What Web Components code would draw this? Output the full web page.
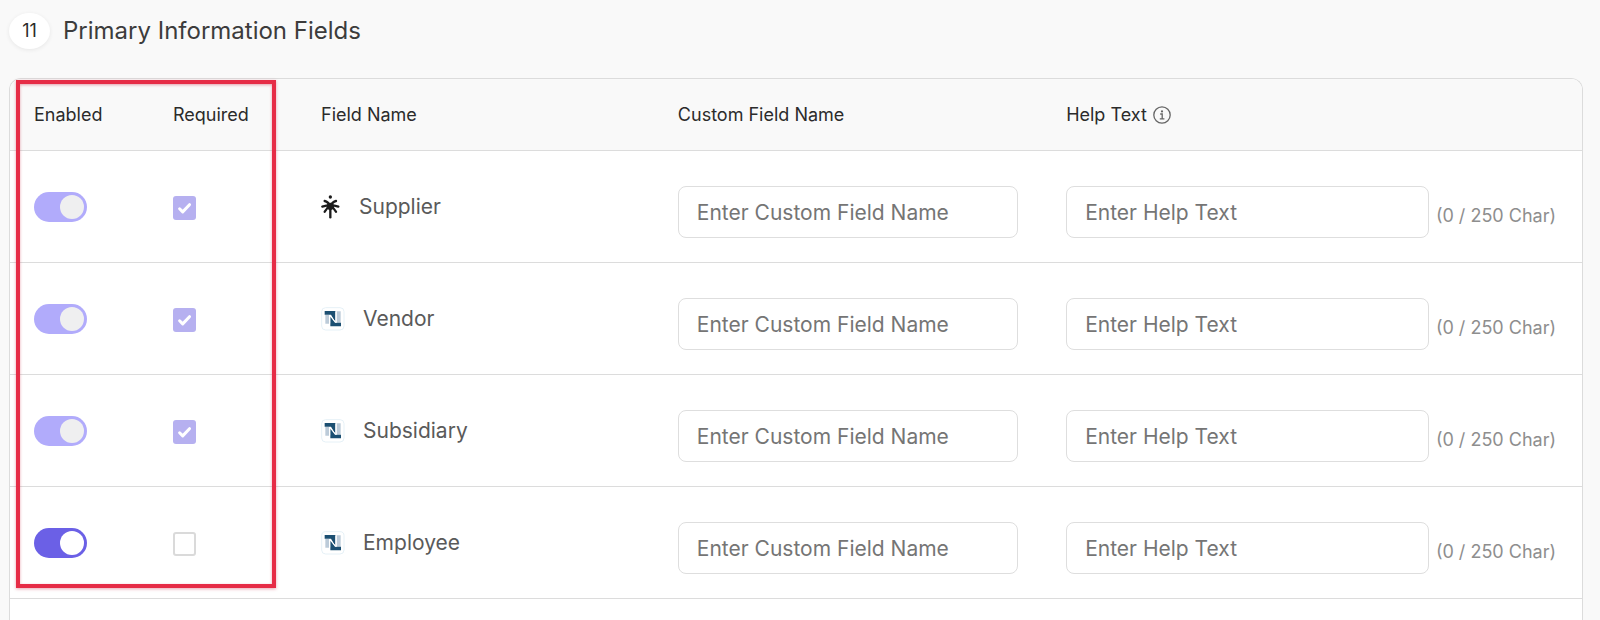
<!DOCTYPE html>
<html lang="en">
<head>
<meta charset="UTF-8">
<meta name="viewport" content="width=device-width, initial-scale=1">
<title>Primary Information Fields</title>
<style>
    body {
        margin: 0;
        background: #f9f9f9;
        font-family: Inter, "Liberation Sans", sans-serif;
        color: #2b2b2b;
    }
</style>
</head>
<body>
<fields-page>
    <section-heading slot="heading" step="11">Primary Information Fields</section-heading>
    <field-table></field-table>
</fields-page>

<script>
class FieldsPage extends HTMLElement {
    constructor() {
        super()
        this.attachShadow({ mode: 'open' })
        this.shadowRoot.innerHTML = `
            <style>
                :host {
                    display: flex;
                    flex-direction: column;
                    gap: 29px;
                    box-sizing: border-box;
                    height: 100vh;
                    overflow: hidden;
                    padding: 13px 17px 0 9px;
                }
                main {
                    flex: 1;
                    display: flex;
                    min-height: 0;
                }
            </style>
            <slot name="heading"></slot>
            <main><slot></slot></main>
        `
    }
}

class SectionHeading extends HTMLElement {
    constructor() {
        super()
        this.attachShadow({ mode: 'open' })
    }

    connectedCallback() {
        this.shadowRoot.innerHTML = `
            <style>
                :host {
                    display: flex;
                    align-items: center;
                    gap: 13px;
                }
                .step {
                    width: 41px;
                    height: 36px;
                    border-radius: 50%;
                    background: #ffffff;
                    box-shadow: 0 1px 4px rgba(0, 0, 0, 0.08);
                    font-size: 18px;
                    line-height: 36px;
                    text-align: center;
                }
                h2 {
                    margin: 0;
                    font-size: 24px;
                    line-height: 36px;
                    font-weight: 400;
                    color: #3c3c3c;
                }
            </style>
            <div class="step">${this.getAttribute('step')}</div>
            <h2><slot></slot></h2>
        `
    }
}

class ToggleSwitch extends HTMLElement {
    constructor() {
        super()
        this.attachShadow({ mode: 'open' })
    }

    connectedCallback() {
        this.shadowRoot.innerHTML = `
            <style>
                :host { display: block; }
                input {
                    appearance: none;
                    display: flex;
                    align-items: center;
                    box-sizing: border-box;
                    width: 53px;
                    height: 30px;
                    margin: 0;
                    padding: 0 3px;
                    border-radius: 15px;
                    background: #cccccc;
                }
                input::before {
                    content: '';
                    width: 24px;
                    height: 24px;
                    border-radius: 50%;
                    background: #ffffff;
                }
                input:checked {
                    justify-content: flex-end;
                    background: #6b60e6;
                }
                input:disabled { background: #b1abfb; }
                input:disabled::before { background: #efeff0; }
            </style>
            <input type="checkbox" role="switch" aria-label="${this.getAttribute('label')}"
                ${this.hasAttribute('checked') ? 'checked' : ''} ${this.hasAttribute('disabled') ? 'disabled' : ''}>
        `
    }
}

class TickBox extends HTMLElement {
    constructor() {
        super()
        this.attachShadow({ mode: 'open' })
    }

    connectedCallback() {
        this.shadowRoot.innerHTML = `
            <style>
                :host {
                    display: grid;
                    width: 23px;
                    padding-top: 3px;
                }
                input, svg { grid-area: 1 / 1; }
                input {
                    appearance: none;
                    box-sizing: border-box;
                    width: 23px;
                    height: 24px;
                    margin: 0;
                    border: 2px solid #dadada;
                    border-radius: 3px;
                    background: #ffffff;
                }
                input:checked {
                    border: 0;
                    background: #b6b0f0;
                }
                svg {
                    width: 23px;
                    height: 24px;
                    pointer-events: none;
                    visibility: hidden;
                }
                input:checked + svg { visibility: visible; }
            </style>
            <input type="checkbox" aria-label="${this.getAttribute('label')}"
                ${this.hasAttribute('checked') ? 'checked' : ''} ${this.hasAttribute('disabled') ? 'disabled' : ''}>
            <svg viewBox="0 0 23 24" fill="none" stroke="#ffffff" stroke-width="3" stroke-linecap="round" stroke-linejoin="round">
                <path d="M6.6 12.8l3.1 3.1 6.8-7.2"/>
            </svg>
        `
    }
}

const logos = {
    // palm-shaped mark
    zip: `<svg width="20" height="24" viewBox="0 0 60 72" aria-hidden="true">
        <circle cx="28" cy="6" r="5" fill="#1c1c1c"/>
        <g fill="none" stroke="#1c1c1c" stroke-width="7" stroke-linecap="round">
            <path d="M28 32V67"/>
            <path d="M28 34Q22 20 11 18"/>
            <path d="M28 34Q34 20 45 18"/>
            <path d="M28 31Q16 31 4 35"/>
            <path d="M28 31Q40 31 52 35"/>
            <path d="M28 32Q17 38 11 50"/>
            <path d="M28 32Q39 38 45 50"/>
        </g>
        <circle cx="28" cy="34" r="11" fill="#1c1c1c"/>
    </svg>`,
    netsuite: `<svg width="24" height="24" viewBox="0 0 72 72" aria-hidden="true">
        <rect x="2" y="2" width="67" height="67" rx="12" fill="#ffffff" stroke="#e6f1f7" stroke-width="3"/>
        <path fill="#bccbd9" d="M13 24h11v26H13zM47 13h12v34H47z"/>
        <path fill="#1b4f72" d="M11 12h32v33L30 23H11z"/>
        <path fill="#1b4f72" d="M28 29l14 18h18v11H28z"/>
        <path fill="none" stroke="#ffffff" stroke-width="3" d="M26 49V24l19 23V15"/>
    </svg>`
}

class FieldLabel extends HTMLElement {
    constructor() {
        super()
        this.attachShadow({ mode: 'open' })
    }

    connectedCallback() {
        this.shadowRoot.innerHTML = `
            <style>
                :host {
                    display: flex;
                    align-items: center;
                    gap: 18px;
                    font-size: 21px;
                    line-height: 28px;
                    color: #5a5a5a;
                }
                svg { flex: none; }
            </style>
            ${logos[this.getAttribute('logo')]}
            <span><slot></slot></span>
        `
    }
}

class TextField extends HTMLElement {
    constructor() {
        super()
        this.attachShadow({ mode: 'open' })
    }

    connectedCallback() {
        const max = this.getAttribute('max')
        this.shadowRoot.innerHTML = `
            <style>
                :host {
                    display: flex;
                    align-items: center;
                    gap: 7px;
                    padding-top: 11px;
                }
                input {
                    flex: 1;
                    min-width: 0;
                    box-sizing: border-box;
                    height: 52px;
                    padding: 0 18px;
                    border: 1px solid #dedede;
                    border-radius: 8px;
                    background: #ffffff;
                    font: inherit;
                    font-size: 21px;
                    color: #2b2b2b;
                }
                input::placeholder {
                    color: #757575;
                    opacity: 1;
                }
                output {
                    padding-top: 8px;
                    font-size: 18px;
                    line-height: 24px;
                    color: #8e8e8e;
                    white-space: nowrap;
                }
            </style>
            <input type="text" id="text" placeholder="${this.getAttribute('placeholder')}" aria-label="${this.getAttribute('label')}">
            ${max ? `<output for="text">(0 / ${max} Char)</output>` : ''}
        `
        if (max) {
            const input = this.shadowRoot.querySelector('input')
            const output = this.shadowRoot.querySelector('output')
            input.maxLength = max
            input.addEventListener('input', () => {
                output.textContent = `(${input.value.length} / ${max} Char)`
            })
        }
    }
}

// outline drawn over the Enabled and Required columns
class HighlightBox extends HTMLElement {
    constructor() {
        super()
        this.attachShadow({ mode: 'open' })
        this.shadowRoot.innerHTML = `
            <style>
                :host {
                    display: block;
                    box-sizing: border-box;
                    border: 4px solid #e62c46;
                    box-shadow: 0 1px 3px rgba(200, 30, 60, 0.4), inset 0 1px 3px rgba(200, 30, 60, 0.4);
                    pointer-events: none;
                }
            </style>
        `
    }
}

const fields = [
    { name: 'Supplier', logo: 'zip', locked: true },
    { name: 'Vendor', logo: 'netsuite', locked: true },
    { name: 'Subsidiary', logo: 'netsuite', locked: true },
    { name: 'Employee', logo: 'netsuite', locked: false }
]

class FieldTable extends HTMLElement {
    constructor() {
        super()
        this.attachShadow({ mode: 'open' })
        this.render()
    }

    row(field) {
        return `
            <tr>
                <td><toggle-switch label="${field.name} enabled" checked ${field.locked ? 'disabled' : ''}></toggle-switch></td>
                <td><tick-box label="${field.name} required" ${field.locked ? 'checked disabled' : ''}></tick-box></td>
                <td><field-label logo="${field.logo}">${field.name}</field-label></td>
                <td><text-field label="${field.name} custom field name" placeholder="Enter Custom Field Name"></text-field></td>
                <td><text-field label="${field.name} help text" placeholder="Enter Help Text" max="250"></text-field></td>
            </tr>
        `
    }

    render() {
        this.shadowRoot.innerHTML = `
            <style>
                :host {
                    display: block;
                    flex: 1;
                    position: relative;
                    border: 1px solid #dcdcdc;
                    border-bottom: 0;
                    border-radius: 12px 12px 0 0;
                    background: #ffffff;
                }
                table {
                    width: 100%;
                    table-layout: fixed;
                    border-collapse: separate;
                    border-spacing: 0;
                }
                .enabled { width: 139px; }
                .required { width: 148px; }
                .name { width: 22.7%; }
                .custom { width: 24.7%; }
                th, td {
                    padding: 24px;
                    border-bottom: 1px solid #dcdcdc;
                    text-align: left;
                    vertical-align: middle;
                }
                td:last-child { padding-right: 26px; }
                th {
                    padding: 24px 24px 23px;
                    background: #f9f9f9;
                    font-size: 18px;
                    line-height: 24px;
                    font-weight: 400;
                }
                th:first-child { border-top-left-radius: 11px; }
                th:last-child { border-top-right-radius: 11px; }
                .help {
                    display: flex;
                    align-items: center;
                    gap: 6px;
                }
                highlight-box {
                    position: absolute;
                    top: 1px;
                    left: 6px;
                    width: 260px;
                    height: 508px;
                }
            </style>
            <table>
                <colgroup>
                    <col class="enabled">
                    <col class="required">
                    <col class="name">
                    <col class="custom">
                    <col>
                </colgroup>
                <thead>
                    <tr>
                        <th>Enabled</th>
                        <th>Required</th>
                        <th>Field Name</th>
                        <th>Custom Field Name</th>
                        <th>
                            <div class="help">Help Text
                                <svg width="18" height="18" viewBox="0 0 18 18" fill="none" stroke="#666666" aria-hidden="true">
                                    <circle cx="9" cy="9" r="8.2" stroke-width="1.3"/>
                                    <path stroke-width="1.3" d="M7.2 8h2v4.6M6.8 12.8h4.6"/>
                                    <circle cx="9" cy="5.4" r="1.1" fill="#666666" stroke="none"/>
                                </svg>
                            </div>
                        </th>
                    </tr>
                </thead>
                <tbody>${fields.map(field => this.row(field)).join('')}</tbody>
            </table>
            <highlight-box></highlight-box>
        `
    }
}

customElements.define('fields-page', FieldsPage)
customElements.define('section-heading', SectionHeading)
customElements.define('toggle-switch', ToggleSwitch)
customElements.define('tick-box', TickBox)
customElements.define('field-label', FieldLabel)
customElements.define('text-field', TextField)
customElements.define('highlight-box', HighlightBox)
customElements.define('field-table', FieldTable)
</script>
</body>
</html>
